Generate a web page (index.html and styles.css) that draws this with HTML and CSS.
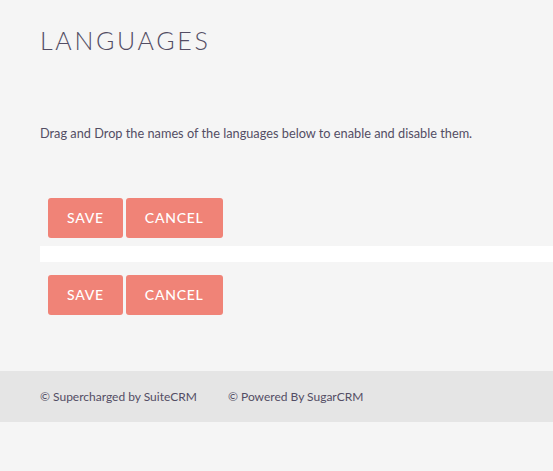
FILE: index.html
```html
<!DOCTYPE html>
<html>
    <head>
        <link rel="stylesheet" href="styles.css">
    </head>
    <body>
        <div class="content">
            <h2 class="module-title">LANGUAGES</h2>
            <p class="intro">Drag and Drop the names of the languages below to enable and disable them.</p>

            <div class="button-row">
                <button class="button">SAVE</button>
                <button class="button">CANCEL</button>
            </div>

            <div class="language-table"></div>

            <div class="button-row">
                <button class="button">SAVE</button>
                <button class="button">CANCEL</button>
            </div>
        </div>

        <footer class="footer">
            <span class="copyright">&copy; Supercharged by SuiteCRM</span>
            <span class="copyright">&copy; Powered By SugarCRM</span>
        </footer>
    </body>
</html>
```

FILE: styles.css
```css
body, html {
    margin: 0;
    padding: 0;
    background-color: #f5f5f5;
    color: #534d64;
    font-family: 'Lato', sans-serif;
}

.content {
    padding: 26px 0 56px 40px;
}

.module-title {
    margin: 0;
    font-size: 25px;
    font-weight: 300;
    letter-spacing: 2.7px;
    line-height: 28px;
}

.intro {
    margin: 70px 0 0;
    font-size: 12.75px;
    line-height: 18px;
}

.button-row {
    display: flex;
    gap: 3px;
    padding-left: 8px;
}

.intro + .button-row {
    margin-top: 56px;
}

.button {
    height: 40px;
    padding: 0 19px 1px;
    border: none;
    border-radius: 3px;
    background-color: #f08377;
    color: white;
    font-family: 'Lato', sans-serif;
    font-size: 14px;
    font-weight: 500;
    letter-spacing: 0.75px;
}

.language-table {
    height: 16px;
    margin: 8px 0 13px;
    background-color: white;
}

.footer {
    display: flex;
    gap: 31px;
    align-items: center;
    height: 51px;
    padding-left: 40px;
    background-color: #e5e5e5;
    font-size: 12px;
}
```
